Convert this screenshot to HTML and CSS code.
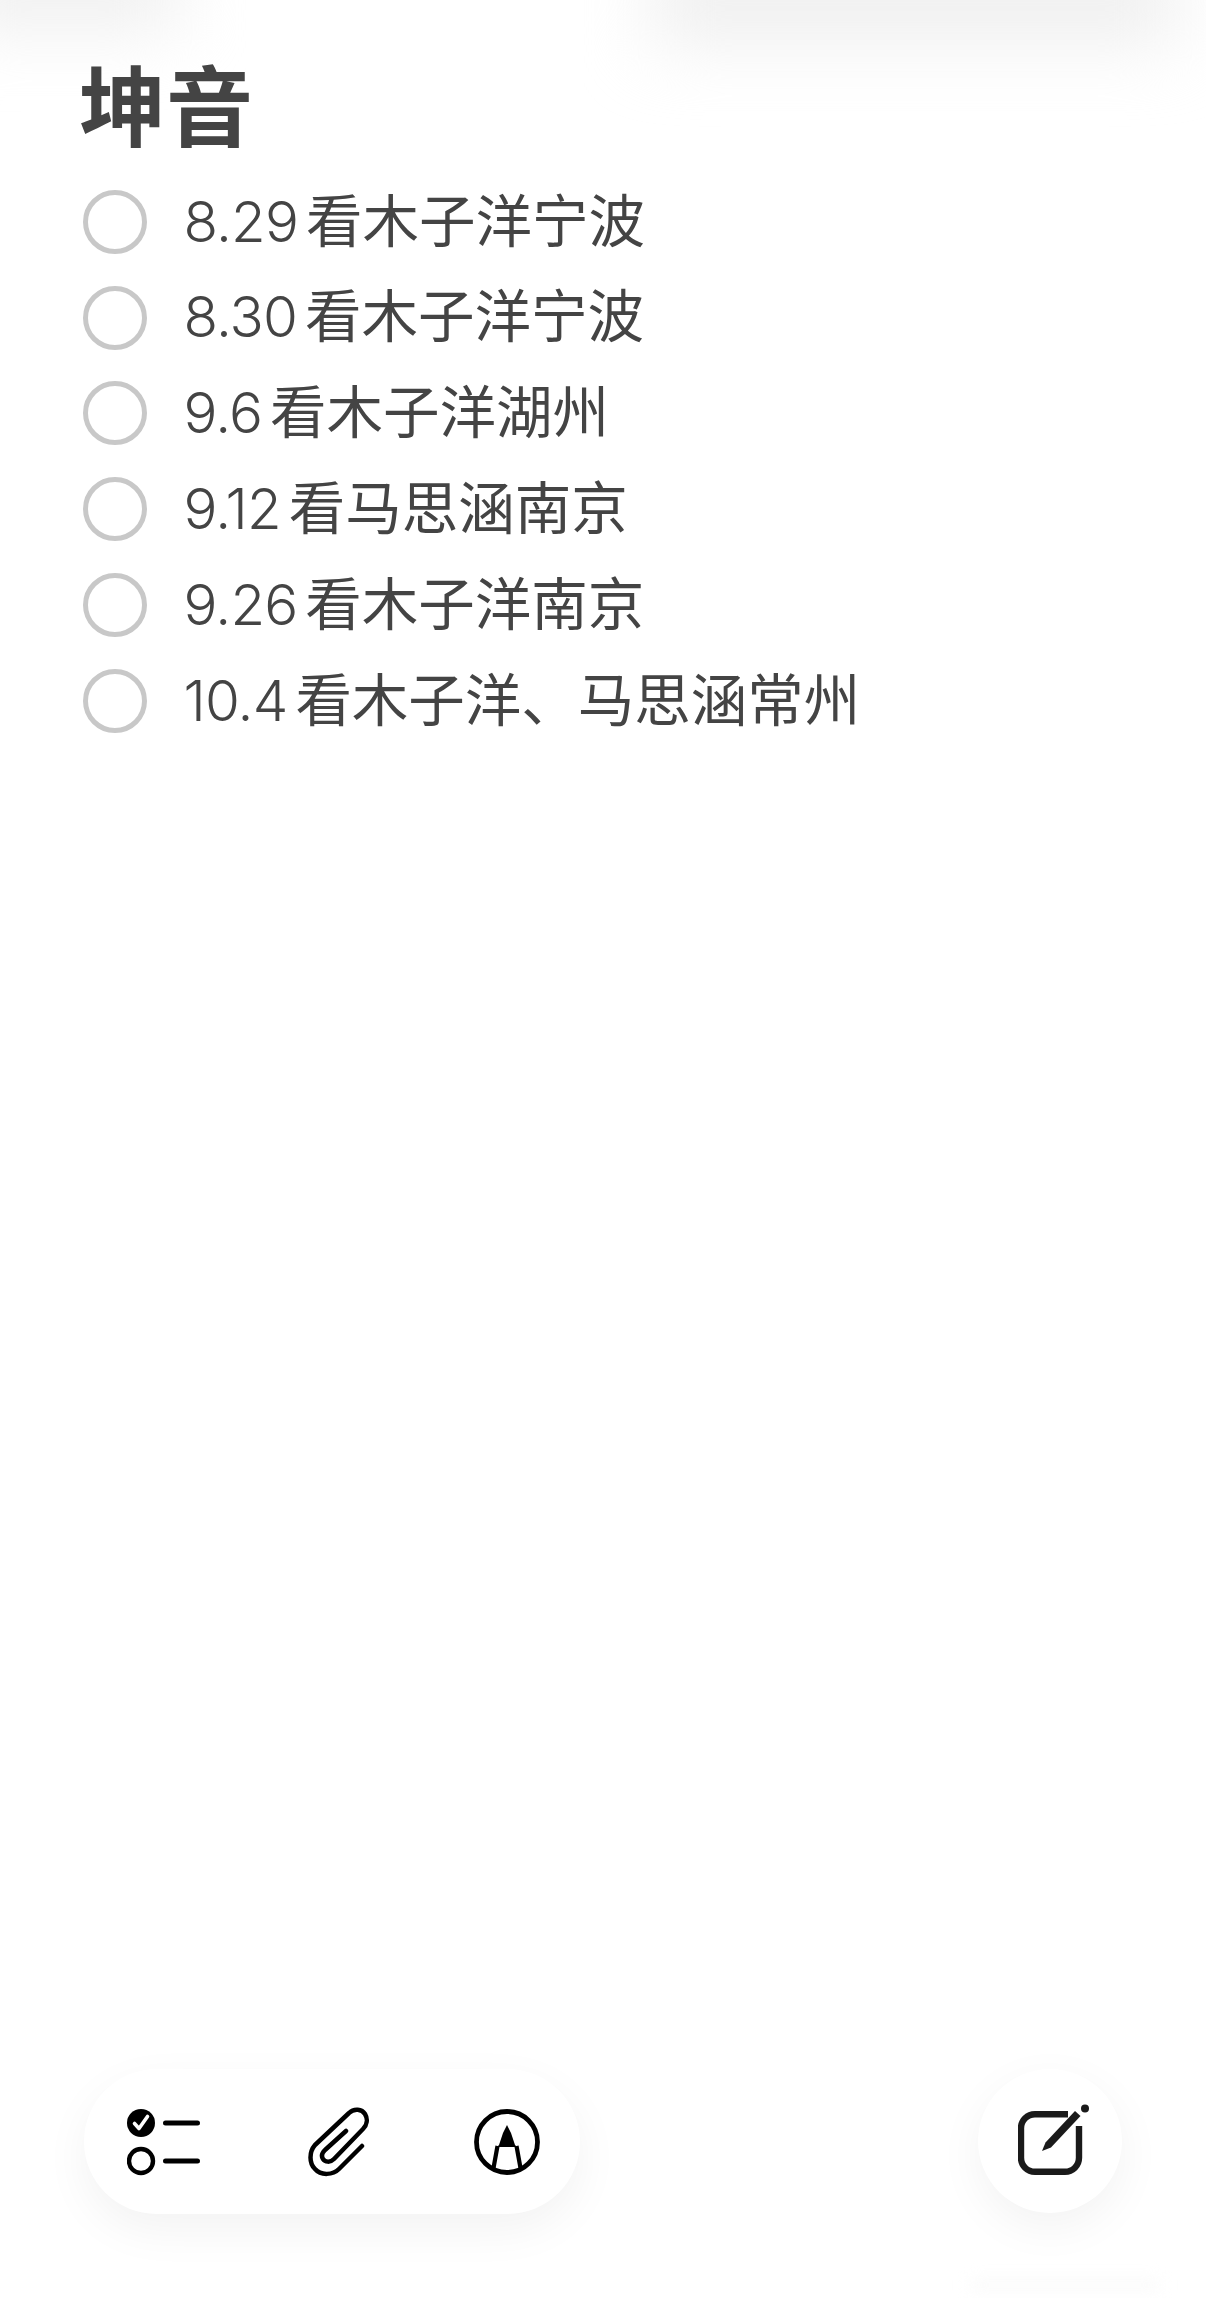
FILE: index.html
```html
<!DOCTYPE html>
<html lang="zh-CN">
<head>
  <meta charset="UTF-8" />
  <title>坤音</title>
  <link rel="stylesheet" href="styles.css">
</head>
<body>

  <div class="shade shade-left"></div>
  <div class="shade shade-right"></div>
  <div class="shade shade-bottom"></div>

  <main class="note">
    <h1 class="note-title">坤音</h1>
    <ul class="todo-list">
      <li class="todo"><span class="todo-circle"></span><span class="todo-text"><span class="todo-date">8.29</span> 看木子洋宁波</span></li>
      <li class="todo"><span class="todo-circle"></span><span class="todo-text"><span class="todo-date">8.30</span> 看木子洋宁波</span></li>
      <li class="todo"><span class="todo-circle"></span><span class="todo-text"><span class="todo-date">9.6</span> 看木子洋湖州</span></li>
      <li class="todo"><span class="todo-circle"></span><span class="todo-text"><span class="todo-date">9.12</span> 看马思涵南京</span></li>
      <li class="todo"><span class="todo-circle"></span><span class="todo-text"><span class="todo-date">9.26</span> 看木子洋南京</span></li>
      <li class="todo"><span class="todo-circle"></span><span class="todo-text"><span class="todo-date">10.4</span> 看木子洋、马思涵常州</span></li>
    </ul>
  </main>

  <div class="toolbar">
    <div class="tool-pill">
      <svg class="icon-list" width="75" height="70" viewBox="0 0 75 70">
        <circle cx="14" cy="16" r="14" fill="#000"/>
        <path d="M7.5 16.5 L12 21.5 L20.5 9.5" fill="none" stroke="#fff" stroke-width="3.6" stroke-linecap="round" stroke-linejoin="round"/>
        <circle cx="14" cy="54" r="12" fill="none" stroke="#000" stroke-width="4.4"/>
        <path d="M38.5 16 H70.5 M38.5 54 H70.5" fill="none" stroke="#000" stroke-width="5" stroke-linecap="round"/>
      </svg>
      <svg class="icon-clip" width="64" height="70" viewBox="0 0 64 70">
        <path d="M56 39 L33 62 C27 68 15 69 9 62 C3 56 3 45 9 38 L43 6 C48 1 56 2 59 7 C62 12 61 18 57 22 L28 52 C24 56 19 55 17 52 C15 49 16 46 19 43 L40 24" fill="none" stroke="#000" stroke-width="4.5" stroke-linecap="round" stroke-linejoin="round"/>
      </svg>
      <svg class="icon-markup" width="66" height="66" viewBox="0 0 66 66">
        <circle cx="33" cy="33" r="30.5" fill="none" stroke="#000" stroke-width="4.8"/>
        <path d="M33 16 L37 24 L41 36 L43 38 H23 L25 36 L29 24 Z" fill="#000"/>
        <path d="M23.5 37 L19.5 59 M42.5 37 L46.5 59" fill="none" stroke="#000" stroke-width="4.2"/>
      </svg>
    </div>
    <div class="tool-round">
      <svg class="icon-compose" width="72" height="72" viewBox="0 0 72 72">
        <path d="M50 10.2 H17 a14 14 0 0 0 -14 14 V53.8 a14 14 0 0 0 14 14 H47 a14 14 0 0 0 14 -14 V22" fill="none" stroke="#1a1a1a" stroke-width="6.4"/>
        <path d="M24 47 L27.5 38.5 L57 7 L62.5 12 L33 43.5 Z" fill="#1a1a1a"/>
        <circle cx="67" cy="4.5" r="4" fill="#1a1a1a"/>
      </svg>
    </div>
  </div>

</body>
</html>
```

FILE: styles.css
```css
* {
  box-sizing: border-box;
}

html, body {
  margin: 0;
  height: 2298px;
  background-color: #fff;
  overflow: hidden;
}

body {
  display: flex;
  flex-direction: column;
  position: relative;
  font-family: Inter, "Noto Sans CJK SC", sans-serif;
  color: #444;
}

/* blurred smudges along the top and bottom edge */
.shade {
  position: absolute;
  background-color: #f0f0f0;
  filter: blur(34px);
}

.shade-left {
  top: -55px;
  left: -50px;
  width: 230px;
  height: 85px;
}

.shade-right {
  top: -50px;
  left: 650px;
  width: 530px;
  height: 95px;
}

.shade-bottom {
  top: 2282px;
  left: 970px;
  width: 190px;
  height: 6px;
  filter: blur(8px);
  background-color: #f6f6f6;
}

.note {
  position: relative;
  padding: 52px 0 0 82.5px;
}

.note-title {
  margin: 0 0 0 -3.5px;
  font-family: "Noto Sans CJK SC", sans-serif;
  font-size: 87px;
  line-height: 100px;
  font-weight: 700;
}

.todo-list {
  list-style: none;
  margin: 22px 0 0;
  padding: 0;
}

.todo {
  display: flex;
  align-items: center;
  gap: 37px;
  height: 95.8px;
}

.todo-circle {
  flex: none;
  width: 64px;
  height: 64px;
  border: 5px solid #c8c8c8;
  border-radius: 50%;
}

.todo-text {
  font-size: 56.5px;
  font-weight: 400;
  line-height: 1;
  word-spacing: -8px;
  white-space: nowrap;
}

.todo-date {
  font-weight: 350;
  letter-spacing: -0.8px;
}

.toolbar {
  position: relative;
  display: flex;
  justify-content: space-between;
  margin-top: auto;
  padding: 0 84px 84px;
}

.tool-pill {
  display: flex;
  align-items: center;
  gap: 104px;
  width: 496px;
  height: 145px;
  padding-left: 43px;
  border-radius: 73px;
  background-color: #fff;
  box-shadow: 0 16px 46px rgba(0, 0, 0, 0.05);
}

.tool-round {
  width: 144px;
  height: 144px;
  padding: 35px 0 0 40px;
  border-radius: 50%;
  background-color: #fff;
  box-shadow: 0 14px 46px rgba(0, 0, 0, 0.05);
}

.tool-round svg,
.tool-pill svg {
  display: block;
}
```
